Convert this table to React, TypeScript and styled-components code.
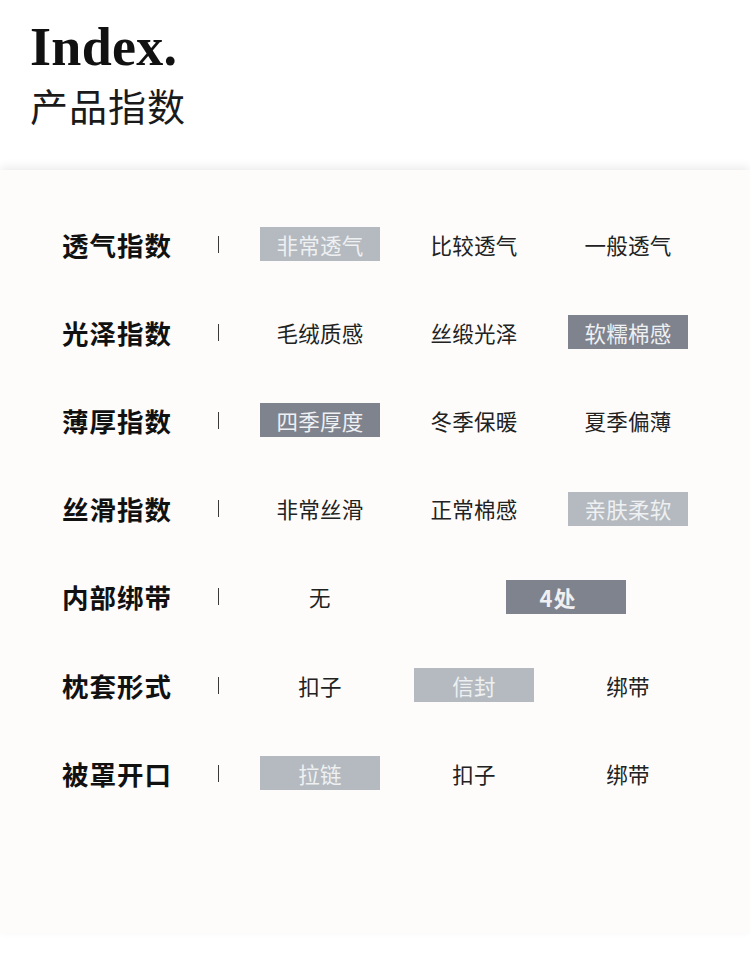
import React from "react";
import styled, { createGlobalStyle } from "styled-components";

const Global = createGlobalStyle`
  html, body { margin: 0; padding: 0; background: #ffffff; }
  body { font-family: "Noto Sans CJK SC", "Noto Sans", sans-serif; }
`;

const Page = styled.div`
  width: 750px;
  height: 960px;
  background: #ffffff;
  display: flex;
  flex-direction: column;
  overflow: hidden;
`;

const Header = styled.header`
  height: 170px;
  box-sizing: border-box;
  padding: 20px 0 0 30px;
  display: flex;
  flex-direction: column;
`;

const Title = styled.h1`
  margin: 0;
  font-family: "Liberation Serif", "Times New Roman", serif;
  font-weight: 700;
  font-size: 54px;
  line-height: 54px;
  color: #111111;
  letter-spacing: 0.3px;
`;

const Subtitle = styled.h2`
  margin: 12px 0 0 0;
  font-family: "Noto Sans CJK SC", sans-serif;
  font-weight: 400;
  font-size: 38px;
  line-height: 38px;
  color: #1a1a1a;
  letter-spacing: 1px;
`;

const Panel = styled.section`
  height: 763px;
  box-sizing: border-box;
  background: #fdfcfa;
  box-shadow: 0 -3px 9px rgba(0, 0, 0, 0.08);
  padding: 30px 0 0 62px;
  display: flex;
  flex-direction: column;
`;

const Row = styled.div`
  height: 88.2px;
  display: flex;
  align-items: center;
`;

const Label = styled.div`
  width: 156px;
  font-family: "Noto Sans CJK SC", sans-serif;
  font-weight: 700;
  font-size: 26.5px;
  letter-spacing: 1px;
  color: #111111;
`;

const Separator = styled.span`
  width: 1px;
  height: 17px;
  background: #3a3a3a;
  margin-right: 41px;
`;

const Options = styled.div`
  display: grid;
  grid-template-columns: repeat(3, 120px);
  column-gap: 34px;
  align-items: center;
`;

type Tone = "none" | "light" | "dark";

const Option = styled.div<{ $tone: Tone; $shift?: number; $span?: boolean }>`
  height: 34px;
  width: 120px;
  display: flex;
  align-items: center;
  justify-content: center;
  font-family: "Noto Sans CJK SC", sans-serif;
  font-size: 21.5px;
  font-weight: 400;
  letter-spacing: 0.3px;
  color: ${(p) => (p.$tone === "none" ? "#222222" : "#eef0f2")};
  background: ${(p) =>
    p.$tone === "light" ? "#b4bac0" : p.$tone === "dark" ? "#7f838e" : "transparent"};
  grid-column: ${(p) => (p.$span ? "2 / 4" : "auto")};
  margin-left: ${(p) => (p.$shift ? `${p.$shift}px` : "0")};
`;

const Strong = styled.span`
  font-weight: 700;
  font-size: 22px;
  letter-spacing: 1px;
  margin-right: 16px;
`;

type Item = { text: string; tone: Tone };

const rows: { label: string; items: Item[] }[] = [
  {
    label: "透气指数",
    items: [
      { text: "非常透气", tone: "light" },
      { text: "比较透气", tone: "none" },
      { text: "一般透气", tone: "none" },
    ],
  },
  {
    label: "光泽指数",
    items: [
      { text: "毛绒质感", tone: "none" },
      { text: "丝缎光泽", tone: "none" },
      { text: "软糯棉感", tone: "dark" },
    ],
  },
  {
    label: "薄厚指数",
    items: [
      { text: "四季厚度", tone: "dark" },
      { text: "冬季保暖", tone: "none" },
      { text: "夏季偏薄", tone: "none" },
    ],
  },
  {
    label: "丝滑指数",
    items: [
      { text: "非常丝滑", tone: "none" },
      { text: "正常棉感", tone: "none" },
      { text: "亲肤柔软", tone: "light" },
    ],
  },
];

const rowsBottom: { label: string; items: Item[] }[] = [
  {
    label: "枕套形式",
    items: [
      { text: "扣子", tone: "none" },
      { text: "信封", tone: "light" },
      { text: "绑带", tone: "none" },
    ],
  },
  {
    label: "被罩开口",
    items: [
      { text: "拉链", tone: "light" },
      { text: "扣子", tone: "none" },
      { text: "绑带", tone: "none" },
    ],
  },
];

const renderRow = (r: { label: string; items: Item[] }) => (
  <Row key={r.label}>
    <Label>{r.label}</Label>
    <Separator />
    <Options>
      {r.items.map((it, i) => (
        <Option key={i} $tone={it.tone}>
          {it.text}
        </Option>
      ))}
    </Options>
  </Row>
);

export default function App() {
  return (
    <>
      <Global />
      <Page>
        <Header>
          <Title>Index.</Title>
          <Subtitle>产品指数</Subtitle>
        </Header>
        <Panel>
          {rows.map(renderRow)}
          <Row>
            <Label>内部绑带</Label>
            <Separator />
            <Options>
              <Option $tone="none">无</Option>
              <Option $tone="dark" $span $shift={92}>
                <Strong>4处</Strong>
              </Option>
            </Options>
          </Row>
          {rowsBottom.map(renderRow)}
        </Panel>
      </Page>
    </>
  );
}
